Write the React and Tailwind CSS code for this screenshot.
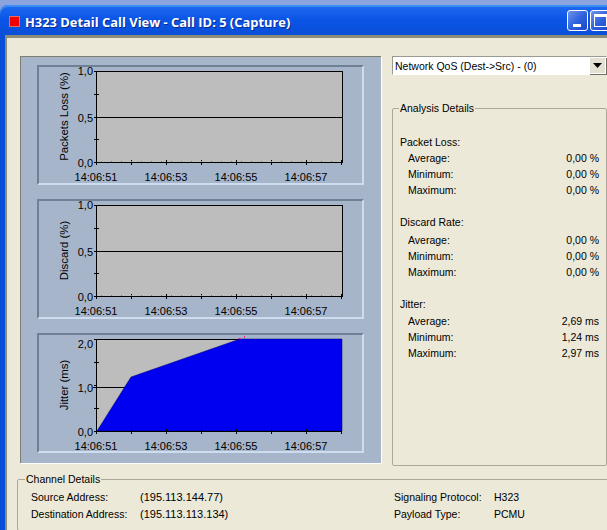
import React from 'react';

const stats = [
  {
    title: 'Packet Loss:',
    top: 'mt-[18px]',
    gap: '',
    rows: [['Average:', '0,00 %'], ['Minimum:', '0,00 %'], ['Maximum:', '0,00 %']],
  },
  {
    title: 'Discard Rate:',
    top: 'mt-[16px]',
    gap: 'mb-[2px]',
    rows: [['Average:', '0,00 %'], ['Minimum:', '0,00 %'], ['Maximum:', '0,00 %']],
  },
  {
    title: 'Jitter:',
    top: 'mt-[16px]',
    gap: 'mb-[1px]',
    rows: [['Average:', '2,69 ms'], ['Minimum:', '1,24 ms'], ['Maximum:', '2,97 ms']],
  },
];

const times = ['14:06:51', '14:06:53', '14:06:55', '14:06:57'];

const Chart = ({ label, yLabels, jitter }) => {
  const left = 59;
  const right = 305;
  const top = 6;
  const bottom = jitter ? 98 : 97;
  const xTicks = [0, 1, 2, 3, 4, 5, 6, 7].map((i) => left + i * 35);
  const height = bottom - top;
  return (
    <div className="h-[120px] w-[327px] border-2 border-t-[#6f8094] border-l-[#6f8094] border-r-[#cddcee] border-b-[#cddcee]">
      <svg width="327" height="120" className="-ml-[2px] -mt-[2px] block">
        <rect x={left} y={top} width={right - left} height={height} fill="#bdbdbd" />
        <g shapeRendering="crispEdges" stroke="#000">
          {jitter ? (
            <line x1={left - 3} x2={right} y1={54} y2={54} />
          ) : (
            <line x1={left} x2={right} y1={top + Math.round(height / 2)} y2={top + Math.round(height / 2)} />
          )}
          {!jitter && <rect x={left} y={top} width={right - left} height={height} fill="none" />}
          {jitter && <line x1={left} x2={left + 144} y1={top} y2={top} />}
        </g>
        {jitter && (
          <polygon
            points={`${left + 1},${bottom} ${left + 35},${bottom - 54} ${left + 144},${top} ${right},${top} ${right},${bottom}`}
            fill="#0000f0"
            stroke="#00006a"
            strokeWidth="0.5"
          />
        )}
        <g shapeRendering="crispEdges" stroke="#000">
          <line x1={left} x2={left} y1={top} y2={bottom} />
          <line x1={left} x2={right} y1={bottom} y2={bottom} />
          {[0, 0.25, 0.5, 0.75, 1].map((f) => (
            <line
              key={f}
              x1={left - 2}
              x2={left + (f === 0.25 || f === 0.75 ? 3 : 0)}
              y1={Math.round(top + f * height)}
              y2={Math.round(top + f * height)}
            />
          ))}
          {xTicks.map((x) => (
            <line key={x} x1={x} x2={x} y1={bottom - 2} y2={bottom + 3} />
          ))}
        </g>
        {!jitter &&
          Array.from({ length: 24 }, (_, i) => (
            <rect key={i} x={left + 5 + i * 10} y={bottom - 1} width="1" height="1" fill="#b06a6a" />
          ))}
        {jitter && (
          <>
            <rect x={left + 142} y={top - 1} width="3" height="1" fill="#e0308a" />
            <rect x={left + 148} y={top - 3} width="1" height="2" fill="#e0308a" />
          </>
        )}
        {yLabels.map(([text, y]) => (
          <text key={text} x={left - 3} y={y + 4} textAnchor="end" fontSize="11" fill="#000" fontFamily="Liberation Sans, sans-serif">
            {text}
          </text>
        ))}
        {times.map((t, i) => (
          <text key={t} x={left + i * 70} y={bottom + 19} textAnchor="middle" fontSize="11" fill="#000" fontFamily="Liberation Sans, sans-serif">
            {t}
          </text>
        ))}
        <text
          transform={`translate(31 ${top + height / 2}) rotate(-90)`}
          textAnchor="middle"
          fontSize="11.4"
          fill="#000"
          fontFamily="Liberation Sans, sans-serif"
        >
          {label}
        </text>
      </svg>
    </div>
  );
};

const TitleButton = ({ children }) => (
  <div className="flex h-[21px] w-[21px] shrink-0 rounded-[3px] border border-white bg-gradient-to-br from-[#6f93ea] via-[#2f62de] to-[#1c47c8]">
    {children}
  </div>
);

const App = () => {
  return (
    <div className="flex h-[530px] w-[607px] flex-col overflow-hidden bg-[#8ba4de] pt-[5px] text-[10.5px] leading-[16px] text-black [font-family:'Liberation_Sans',Arial,sans-serif]">
      <div className="flex h-[30px] shrink-0 items-center rounded-tl-[8px] bg-gradient-to-b from-[#1f6bf0] via-[#0a54e6] to-[#0a4fd8] pl-[9px] shadow-[inset_0_2px_0_#3c8cf5]">
        <div className="mt-[2px] h-[11px] w-[11px] shrink-0 border border-[#e86a5a] bg-[#f40000]" />
        <span className="ml-[5px] mt-[3px] whitespace-nowrap text-[12.9px] font-bold text-white [font-family:'Open_Sans',sans-serif] [text-shadow:1px_1px_0_#0a2a90]">
          H323 Detail Call View - Call ID: 5 (Capture)
        </span>
        <div className="-mr-[4px] ml-auto flex gap-[2px]">
          <TitleButton>
            <div className="ml-[5px] mt-[13px] h-[3px] w-[8px] bg-white" />
          </TitleButton>
          <TitleButton>
            <div className="ml-[3px] mt-[3px] h-[13px] w-[13px] border border-t-[3px] border-white" />
          </TitleButton>
        </div>
      </div>

      <div className="flex min-h-0 flex-1 border-l-[5px] border-[#0a4fd8]">
        <div className="min-w-0 flex-1 border-l-2 border-t-[3px] border-[#8f8c7c] bg-[#ece9d8] pl-[13px] pt-[18px]">
          <div className="flex">
            <div className="flex h-[407px] w-[361px] shrink-0 flex-col gap-[14px] border-l border-t border-[#7d7d72] bg-[#a6b5ca] pl-[16px] pt-[8px] shadow-[1px_1px_0_#fff]">
              <Chart label="Packets Loss (%)" yLabels={[['1,0', 6], ['0,5', 53], ['0,0', 98]]} />
              <Chart label="Discard (%)" yLabels={[['1,0', 6], ['0,5', 53], ['0,0', 98]]} />
              <Chart label="Jitter (ms)" jitter yLabels={[['2,0', 11], ['1,0', 55], ['0,0', 99]]} />
            </div>

            <div className="ml-[11px] flex min-w-0 flex-1 flex-col">
              <div className="flex h-[19px] shrink-0 items-center border border-[#9a9a90] border-b-white border-r-white bg-white pl-[2px]">
                <span className="whitespace-nowrap">Network QoS (Dest-&gt;Src) - (0)</span>
                <div className="ml-auto flex h-[17px] w-[17px] items-center justify-center border border-white bg-[#e4e1d2] shadow-[1px_1px_0_#716f64]">
                  <svg width="9" height="5" viewBox="0 0 9 5">
                    <polygon points="0,0 9,0 4.5,5" fill="#000" />
                  </svg>
                </div>
              </div>

              <fieldset className="mt-[25px] h-[366px] rounded-[2px] border border-[#aca899]">
                <legend className="ml-[6px] px-[1px]">Analysis Details</legend>
                <div className="pl-[7px] pr-[7px]">
                  {stats.map((s) => (
                    <div key={s.title} className={s.top}>
                      <div className={s.gap}>{s.title}</div>
                      {s.rows.map(([k, v]) => (
                        <div key={k} className="flex justify-between pl-[8px]">
                          <span>{k}</span>
                          <span>{v}</span>
                        </div>
                      ))}
                    </div>
                  ))}
                </div>
              </fieldset>
            </div>
          </div>

          <fieldset className="-mr-[10px] ml-[-3px] mt-[5px] h-[60px] rounded-[2px] border border-[#aca899]">
            <legend className="ml-[7px] px-[1px]">Channel Details</legend>
            <div className="mt-[2px] flex pl-[13px]">
              <div className="grid w-[363px] grid-cols-[109px_1fr] gap-y-px">
                <span>Source Address:</span>
                <span className="text-[11px]">(195.113.144.77)</span>
                <span>Destination Address:</span>
                <span className="text-[11px]">(195.113.113.134)</span>
              </div>
              <div className="grid grid-cols-[100px_1fr] gap-y-px">
                <span>Signaling Protocol:</span>
                <span>H323</span>
                <span>Payload Type:</span>
                <span>PCMU</span>
              </div>
            </div>
          </fieldset>
        </div>
      </div>
    </div>
  );
};

export default App;
